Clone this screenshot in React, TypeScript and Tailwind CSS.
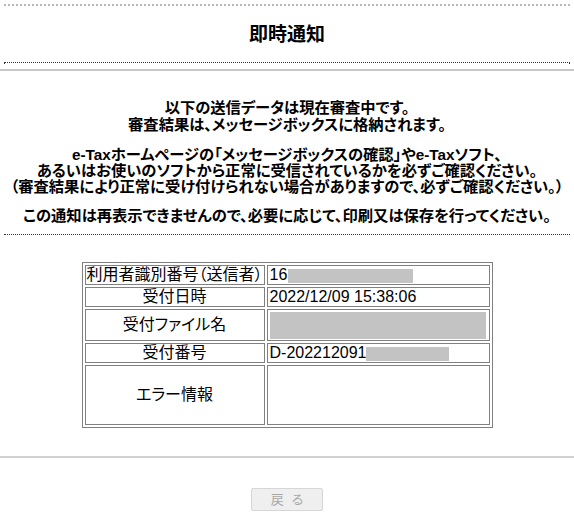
const jp = "font-['Liberation_Sans','Noto_Sans_CJK_JP',sans-serif]";

const Row = ({ label, children, tall }: { label: string; children?: React.ReactNode; tall?: string }) => (
  <tr>
    <td className={`w-[180px] border border-[#808080] text-center text-[16px] leading-[18px] p-0 whitespace-nowrap ${tall ?? "h-[20px]"}`}>
      {label}
    </td>
    <td className="border border-[#808080] text-[16px] leading-[18px] py-0 px-[2px] align-middle whitespace-nowrap">{children}</td>
  </tr>
);

const Mask = ({ className }: { className: string }) => <span className={`inline-block bg-[#c3c3c3] align-middle ${className}`} />;

export default function App() {
  return (
    <div className={`w-[574px] h-[521px] bg-white text-black overflow-hidden [font-feature-settings:'palt'] ${jp}`}>
      <div className="mx-[4px] mt-[4px] border-t-2 border-dotted border-[#b8b8b8]" />
      <h1 className="mt-[17px] text-center text-[19px] leading-[24px] font-bold">即時通知</h1>
      {/* dotted rule with small end ticks */}
      <div className="mx-[4px] mt-[15px] h-[2px] border-t border-x border-t-[#333] border-x-[#333] border-dotted [border-left-style:solid] [border-right-style:solid]" />
      <div className="mt-[5px] border-t-2 border-[#c8c8c8]" />

      <div className="mt-[28px] text-center text-[15.3px] font-bold whitespace-nowrap">
        <p className="leading-[17px]">
          以下の送信データは現在審査中です。
          <br />
          審査結果は、メッセージボックスに格納されます。
        </p>
        <p className="mt-[14px] leading-[16px]">
          e-Taxホームページの「メッセージボックスの確認」やe-Taxソフト、
          <br />
          あるいはお使いのソフトから正常に受信されているかを必ずご確認ください。
          <br />
          （審査結果により正常に受け付けられない場合がありますので、必ずご確認ください。）
        </p>
        <p className="mt-[12px] leading-[17px]">この通知は再表示できませんので、必要に応じて、印刷又は保存を行ってください。</p>
      </div>
      <div className="mx-[4px] mt-[10px] border-t border-dotted border-[#333]" />

      <table className="mx-auto mt-[27px] w-[411px] border-separate border-spacing-[2px] border border-[#808080]">
        <tbody>
          <Row label="利用者識別番号（送信者）">
            16
            <Mask className="ml-[1px] w-[125px] h-[14px]" />
          </Row>
          <Row label="受付日時">2022/12/09 15:38:06</Row>
          <Row label="受付ファイル名" tall="h-[32px]">
            <Mask className="w-[216px] h-[27px]" />
          </Row>
          <Row label="受付番号" tall="h-[19px]">
            D-202212091
            <Mask className="w-[83px] h-[14px]" />
          </Row>
          <Row label="エラー情報" tall="h-[60px]" />
        </tbody>
      </table>

      <div className="mt-[28px] border-t-2 border-[#d0d0d0]" />
      <div className="flex justify-center mt-[30px]">
        <button
          disabled
          className="w-[72px] h-[23px] rounded-[2px] border border-[#d6d6d6] bg-[#efefef] text-[13px] text-[#a8a8a8] tracking-[8px] pl-[8px]"
        >
          戻る
        </button>
      </div>
    </div>
  );
}
